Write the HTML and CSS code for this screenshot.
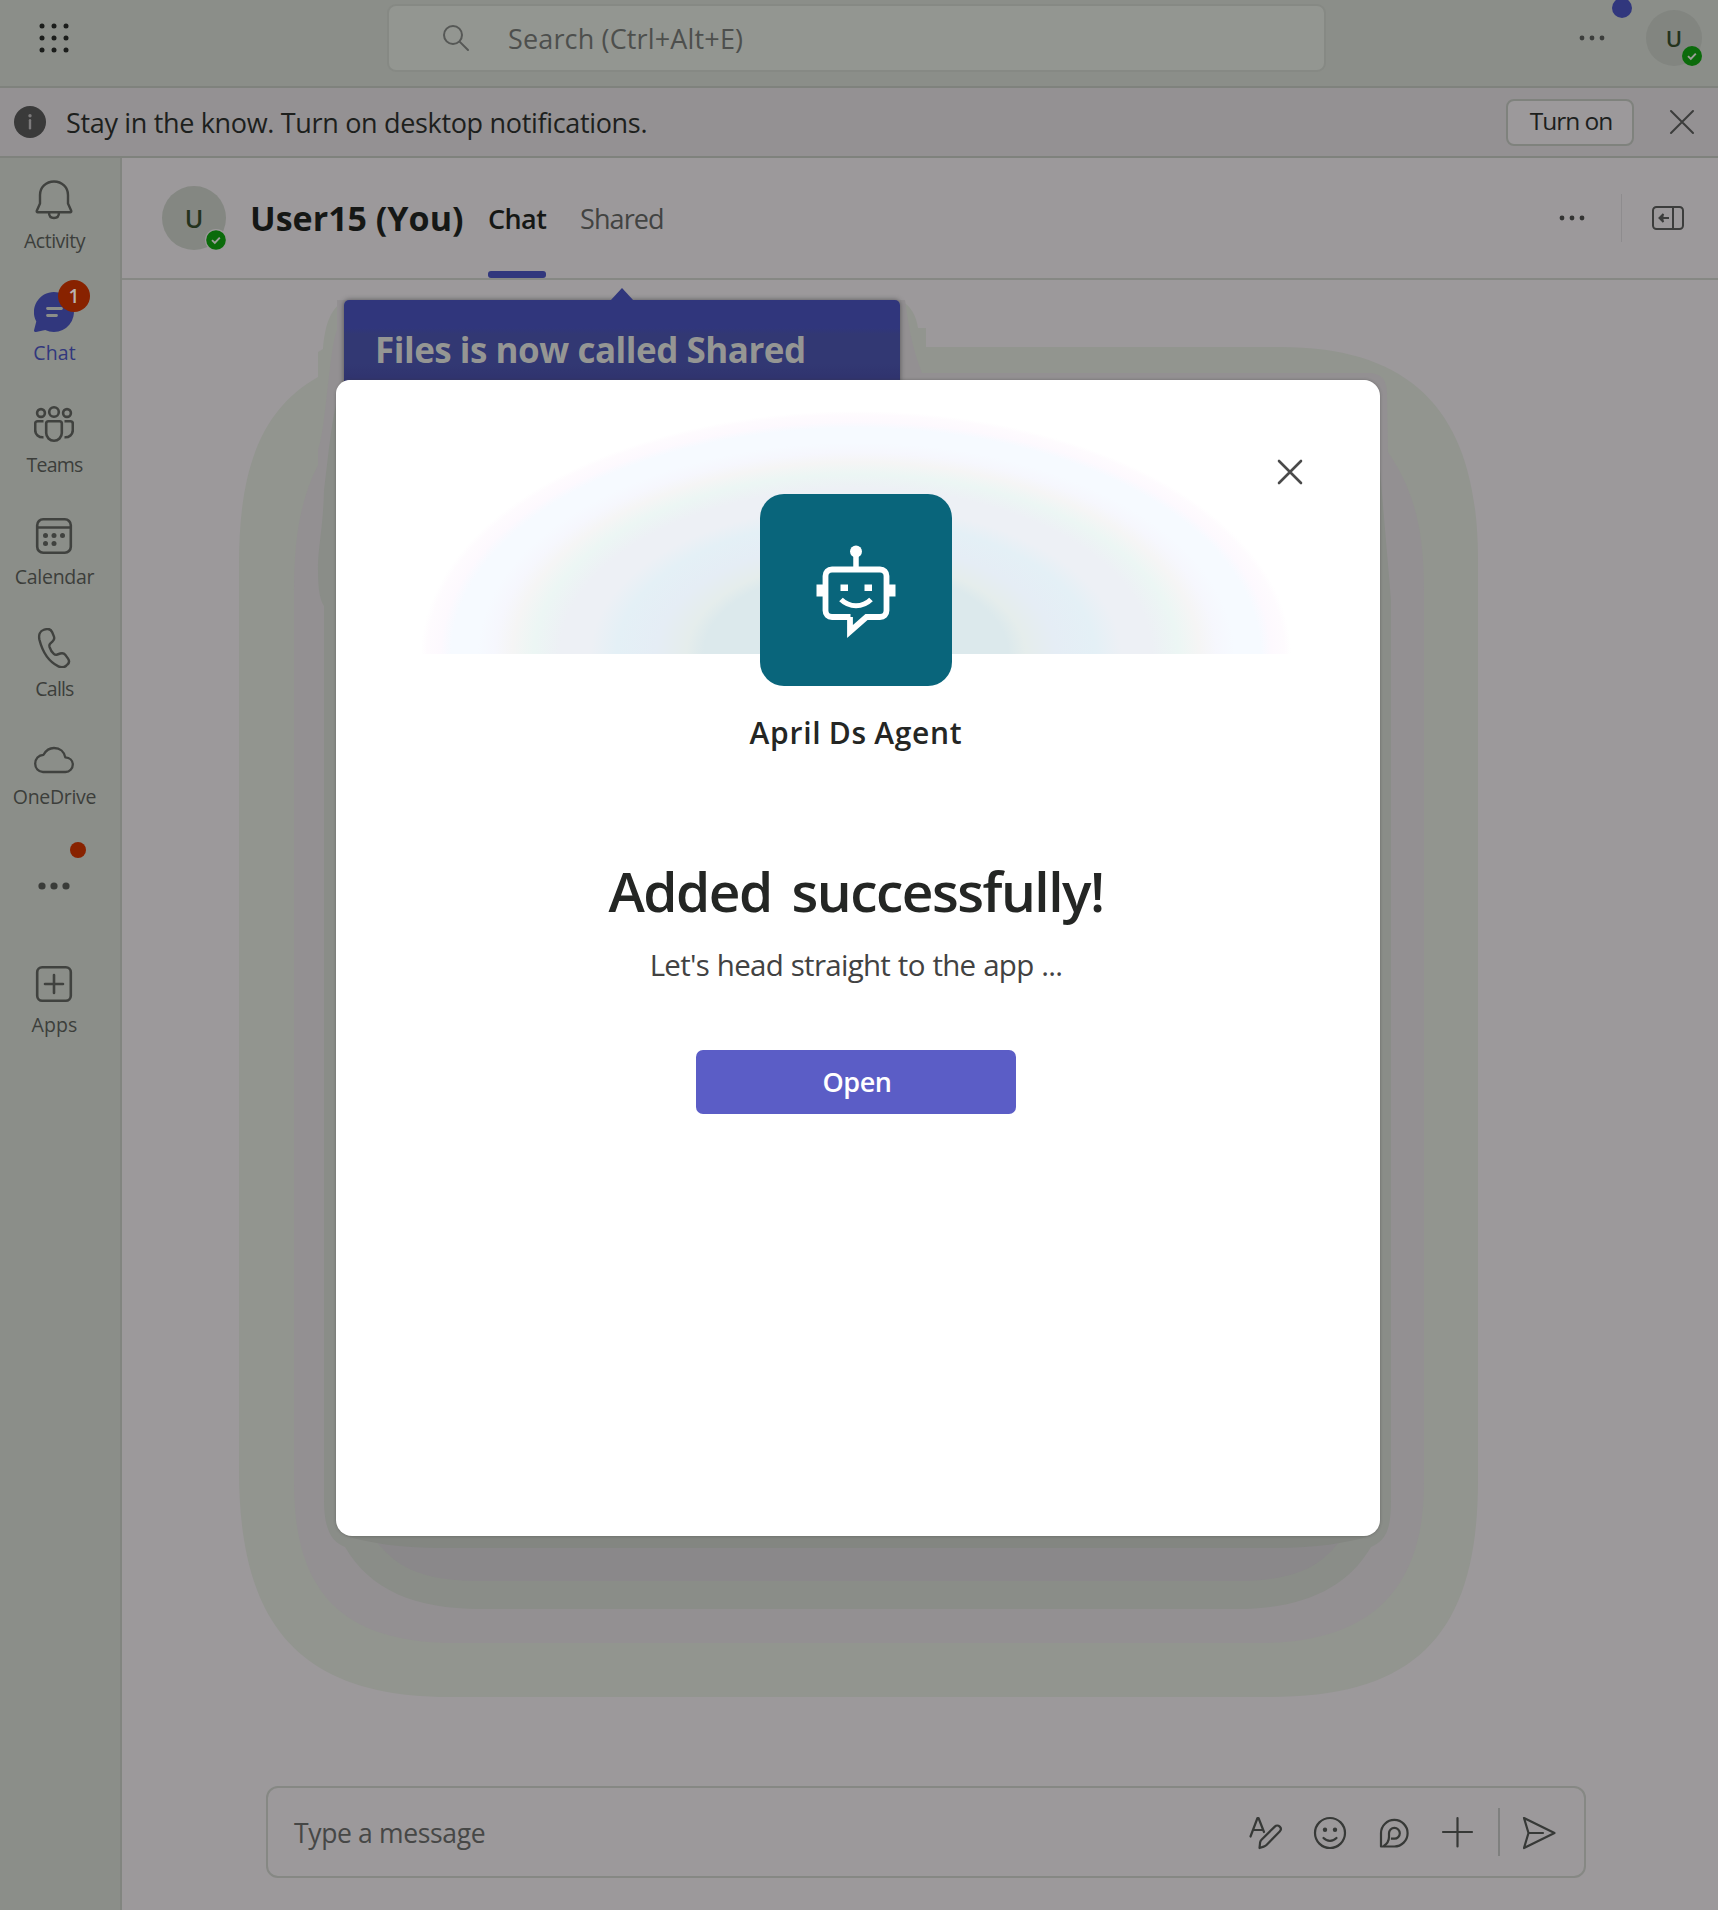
FILE: index.html
```html
<!DOCTYPE html>
<html lang="en">
<head>
<meta charset="utf-8">
<title>Chat</title>
<link rel="stylesheet" href="styles.css">
</head>
<body>
<div class="app">
  <header class="topbar">
    <svg class="waffle" width="32" height="32" viewBox="0 0 32 32"><g fill="#1b1d1b"><circle cx="4" cy="4" r="2.5"/><circle cx="16" cy="4" r="2.5"/><circle cx="28" cy="4" r="2.5"/><circle cx="4" cy="16" r="2.5"/><circle cx="16" cy="16" r="2.5"/><circle cx="28" cy="16" r="2.5"/><circle cx="4" cy="28" r="2.5"/><circle cx="16" cy="28" r="2.5"/><circle cx="28" cy="28" r="2.5"/></g></svg>
    <div class="search">
      <svg width="28" height="28" viewBox="0 0 28 28" fill="none" stroke="#565856" stroke-width="2" stroke-linecap="round"><circle cx="11" cy="11" r="9"/><path d="M17.6 17.6 26 26"/></svg>
      <span class="t-search">Search (Ctrl+Alt+E)</span>
    </div>
    <div class="more-top"><svg width="26" height="6" viewBox="0 0 26 6" fill="#3c3e3c"><circle cx="3" cy="3" r="2.4"/><circle cx="13" cy="3" r="2.4"/><circle cx="23" cy="3" r="2.4"/></svg><i class="news"></i></div>
    <div class="avatar small">U<svg class="status" width="20" height="20" viewBox="0 0 20 20"><circle cx="10" cy="10" r="10" fill="#0b6b0b"/><path d="m6 10.2 2.8 2.8 5-5.4" fill="none" stroke="#9c9f9a" stroke-width="1.9"/></svg></div>
  </header>

  <div class="banner">
    <svg width="32" height="32" viewBox="0 0 32 32"><circle cx="16" cy="16" r="16" fill="#3a3a3a"/><rect x="14.8" y="13" width="2.4" height="10.5" rx="1.2" fill="#7d7b7c"/><circle cx="16" cy="9.7" r="1.7" fill="#7d7b7c"/></svg>
    <span class="t-banner">Stay in the know. Turn on desktop notifications.</span>
    <button class="turn-on"><span class="t-turn">Turn on</span></button>
    <svg class="dismiss" width="26" height="26" viewBox="0 0 26 26" fill="none" stroke="#3c3d3c" stroke-width="2" stroke-linecap="round"><path d="m2 2 22 22M24 2 2 24"/></svg>
  </div>

  <div class="body">
    <nav class="rail">
      <a class="cell"><span class="ico"><svg width="40" height="40" viewBox="0 0 40 40" fill="none" stroke="#40423f" stroke-width="2.4" stroke-linejoin="round"><path d="M20 1.500C12 1.500 6 7.500 6 15v8.500l-3.200 7.200c-.3.9.1 1.600 1 1.600h32.400c.9 0 1.300-.7 1-1.600L34 23.500V15C34 7.500 28 1.500 20 1.500zM15 32.500c0 3.500 2 5.500 5 5.500s5-2 5-5.500"/></svg></span><b class="l-activity">Activity</b></a>
      <a class="cell on"><span class="ico"><svg width="40" height="40" viewBox="0 0 40 40"><path fill="#31377d" d="M20 0a20 20 0 1 1-8.800 38L2 40c-1.300.3-2.300-.8-1.900-2l2.200-8.500A20 20 0 0 1 20 0z"/><path d="M13.500 16.500h14M13.500 23.500h9" stroke="#8b8e89" stroke-width="2.800" stroke-linecap="round"/></svg><i class="badge">1</i></span><b class="l-chat">Chat</b></a>
      <a class="cell"><span class="ico"><svg width="40" height="40" viewBox="0 0 40 40" fill="none" stroke="#40423f" stroke-width="2.600"><circle cx="20" cy="8" r="4.800"/><circle cx="7" cy="9" r="3.900"/><circle cx="33" cy="9" r="3.900"/><path d="M14.500 17.200h11c1.500 0 2.300.8 2.300 2.300v9.500a7.800 7.800 0 0 1-15.600 0v-9.500c0-1.500.8-2.300 2.300-2.300zM9.500 17.200H3.700c-1.600 0-2.500.9-2.500 2.500V26c0 4.500 3.500 7.600 8.300 7.300M30.500 17.200h5.800c1.600 0 2.500.9 2.500 2.500V26c0 4.500-3.500 7.600-8.300 7.300"/></svg></span><b class="l-teams">Teams</b></a>
      <a class="cell"><span class="ico"><svg width="40" height="40" viewBox="0 0 40 40" fill="none" stroke="#40423f" stroke-width="2.600"><rect x="3.200" y="3.200" width="33.600" height="33.600" rx="6"/><path d="M3.200 11.500h33.600"/><g fill="#40423f" stroke="none"><circle cx="11.500" cy="19.500" r="2.500"/><circle cx="20" cy="19.500" r="2.500"/><circle cx="28.500" cy="19.500" r="2.500"/><circle cx="11.500" cy="27.500" r="2.500"/><circle cx="20" cy="27.500" r="2.500"/></g></svg></span><b class="l-calendar">Calendar</b></a>
      <a class="cell"><span class="ico"><svg width="40" height="40" viewBox="0 0 40 40" fill="none" stroke="#40423f" stroke-width="2.400" stroke-linejoin="round"><path d="m10.200 1.700 2.500-.6c2.700-.5 4.500.8 5.500 3.200l1.600 3.800c.8 2 .4 3.900-1.200 5.300l-2.400 2.200c-1 .9-1 2-.6 3.500.7 2.300 2.200 5 4.200 6.700 1.100 1 2.200 1.100 3.500.7l3-1c2-.7 3.900-.1 5.200 1.600l2.400 3.300c1.500 2 1.400 4.400-.5 6.100l-1 1c-2.200 2-5.200 2.300-8 .9C15 33.700 8.800 25 5.500 12 4.400 7.200 5.700 2.900 10.200 1.700z"/></svg></span><b class="l-calls">Calls</b></a>
      <a class="cell drive"><span class="ico"><svg width="40" height="40" viewBox="0 0 40 40" fill="none" stroke="#40423f" stroke-width="2.300" stroke-linejoin="round"><path d="M9 32c-4.600 0-7.800-3.700-7.800-8.300 0-4.900 3.300-8.700 8.300-8.900C11.800 10.700 15.500 8 20 8c6 0 10.300 3.800 11.300 9.400 4.400.2 7.500 3.200 7.500 7.200s-3.200 7.400-7.300 7.400z"/></svg></span><b class="l-drive">OneDrive</b></a>
      <a class="cell more"><svg width="32" height="8" viewBox="0 0 32 8" fill="#3a3c39"><circle cx="4" cy="4" r="3.600"/><circle cx="16" cy="4" r="3.600"/><circle cx="28" cy="4" r="3.600"/></svg><i class="dot"></i></a>
      <a class="cell"><span class="ico"><svg width="40" height="40" viewBox="0 0 40 40" fill="none" stroke="#40423f" stroke-width="2.600" stroke-linecap="round"><rect x="3.200" y="3.200" width="33.600" height="33.600" rx="5"/><path d="M20 11v18M11 20h18"/></svg></span><b class="l-apps">Apps</b></a>
    </nav>

    <main class="main">
      <div class="chat-head">
        <div class="avatar">U<svg class="status" width="22" height="22" viewBox="0 0 22 22"><circle cx="11" cy="11" r="11" fill="#9c999b"/><circle cx="11" cy="11" r="9.800" fill="#0b6b0b"/><path d="m7 11.200 2.800 2.800 5-5.400" fill="none" stroke="#9c9f9a" stroke-width="1.900"/></svg></div>
        <h1 class="t-name">User15 (You)</h1>
        <div class="tab on"><span class="t-chat">Chat</span></div>
        <div class="tab"><span class="t-shared">Shared</span></div>
        <svg class="head-more" width="26" height="6" viewBox="0 0 26 6" fill="#333433"><circle cx="3" cy="3" r="2.400"/><circle cx="13" cy="3" r="2.400"/><circle cx="23" cy="3" r="2.400"/></svg>
        <i class="sep"></i>
        <svg class="panel" width="32" height="24" viewBox="0 0 32 24" fill="none" stroke="#3c3d3c" stroke-width="2"><rect x="1" y="1" width="30" height="22" rx="3.500"/><path d="M21 1v22M17 12H8M11.500 8l-4 4 4 4"/><path d="M11.500 8l-4 4 4 4z" fill="#3c3d3c" stroke="none"/></svg>
      </div>
      <div class="canvas"></div>
      <div class="composer">
        <span class="t-type">Type a message</span>
        <svg width="34" height="34" viewBox="0 0 34 34" fill="none" stroke="#373937" stroke-width="2.200" stroke-linecap="round" stroke-linejoin="round"><path d="m1.500 20.500 7-18.500h1l5.500 14M4.500 14h9.500"/><path d="M10.500 32l.6-5.500c.2-1.200.6-2 1.400-2.800L25.800 10.600c1.400-1.400 3.500-1.400 4.900 0s1.400 3.500 0 4.900L17.500 29c-.8.800-1.600 1.200-2.800 1.600z"/></svg>
        <svg width="34" height="34" viewBox="0 0 34 34" fill="none" stroke="#373937" stroke-width="2.200" stroke-linecap="round"><circle cx="17" cy="17" r="15"/><path d="M10.500 22c3.500 3.700 9.500 3.700 13 0"/><g fill="#373937" stroke="none"><circle cx="12" cy="13.700" r="2.200"/><circle cx="22" cy="13.700" r="2.200"/></g></svg>
        <svg width="34" height="34" viewBox="0 0 34 34" fill="none" stroke="#373937" stroke-width="2.200" stroke-linejoin="round"><path d="M4 30.500V17a13.300 13.300 0 1 1 13.300 13.500z"/><path d="M6.500 30.300c4-2.500 5.500-5.500 5.500-9.500v-3.500a5.400 5.400 0 1 1 5.400 5.400h-3.500"/></svg>
        <svg width="34" height="34" viewBox="0 0 34 34" fill="none" stroke="#373937" stroke-width="2.200" stroke-linecap="round"><path d="M16.500 2v28.500M2 16h29"/></svg>
        <i class="csep"></i>
        <svg class="send" width="34" height="34" viewBox="0 0 34 34" fill="none" stroke="#373937" stroke-width="2.200" stroke-linecap="round" stroke-linejoin="round"><path d="M2 2 32.500 17 2 32l4.500-15zM6.500 17H21"/></svg>
      </div>
    </main>
  </div>

  <svg class="shade" width="1718" height="1910" viewBox="0 0 1718 1910">
    <path fill="#92958f" d="M323 349C325 325 330 310 344 300H900C911 306 916 315 918 328H926V347H1280C1420 347 1478 420 1478 560V1480C1478 1630 1420 1697 1270 1697H450C295 1697 239 1620 239 1470V565C239 470 260 410 318 377V352Z"/>
    <path fill="#939092" d="M337 300H905C909 330 913 350 922 373H1370Q1387 374 1387 393L1388 452C1410 485 1424 520 1424 590V1483C1424 1580 1380 1643 1260 1643H455C340 1643 294 1590 294 1483V590C294 540 300 500 318 465V450C326 430 329 350 337 330Z"/>
    <path fill="#8a8d88" d="M337 400C330 430 328 460 324 490C323 530 318 545 318 570C318 590 320 600 324 606V1500C324 1530 332 1542 345 1547C370 1590 415 1609 480 1609H1236C1300 1609 1346 1590 1371 1547C1386 1540 1391 1530 1391 1500V600L1380 470Z"/>
    <path fill="#8a888a" d="M375 1540C392 1560 410 1581 480 1581H1236C1306 1581 1324 1560 1341 1540Z"/>
    <path fill="#838681" d="M345 1536C370 1543 400 1548 440 1548H1276C1316 1548 1346 1543 1371 1536Z"/>
  </svg>

  <div class="callout"><i class="beak"></i><strong class="t-callout">Files is now called Shared</strong></div>

  <section class="dialog">
    <div class="glow">
      <div class="app-icon">
        <svg width="84" height="96" viewBox="0 0 84 96" fill="none" stroke="#fff" stroke-width="5.800"><circle cx="41" cy="6.500" r="6" fill="#fff" stroke="none"/><path d="M41 10v14" stroke-width="5.500"/><path d="M35.500 72H17c-4 0-6.500-2.500-6.500-6.500V31c0-4 2.500-6.500 6.500-6.500h48c4 0 6.500 2.500 6.500 6.500v34.500c0 4-2.500 6.500-6.500 6.500H51.500L35 86.500V72z"/><g fill="#fff" stroke="none"><path d="M1.500 39.500H9v12H1.500zM73 39.500h7.500v12H73zM25.500 39.500h7.500v6.500h-7.500zM49.500 39.500H57v6.500h-7.500z"/></g><path d="M26 54.500c8.500 8.300 21.500 8.300 30 0" stroke-width="5.200"/></svg>
      </div>
    </div>
    <svg class="close" width="26" height="26" viewBox="0 0 26 26" fill="none" stroke="#4a4a4a" stroke-width="2.600" stroke-linecap="round"><path d="m2 2 22 22M24 2 2 24"/></svg>
    <div class="app-name"><span class="t-app">April Ds Agent</span></div>
    <h2 class="done"><span class="t-done">Added successfully!</span></h2>
    <p class="sub"><span class="t-sub">Let's head straight to the app ...</span></p>
    <button class="open"><span class="t-open">Open</span></button>
  </section>
</div>
</body>
</html>
```
FILE: styles.css
```css
* { box-sizing: border-box; }
body {
  margin: 0;
  font-family: "Open Sans", "Noto Sans", sans-serif;
  color: #1d1f1d;
}
svg { display: block; flex: none; }
span, b, strong, h1, h2 { white-space: nowrap; }
button { font: inherit; padding: 0; margin: 0; }

.app {
  position: relative;
  width: 1718px;
  height: 1910px;
  overflow: hidden;
  display: flex;
  flex-direction: column;
  background: #9c999b;
}

/* top bar */
.topbar {
  height: 88px;
  padding: 0 16px 12px 38px;
  display: flex;
  align-items: center;
  background: #8b8e89;
  border-bottom: 2px solid #7f827d;
  flex: none;
}
.waffle { margin-top: 2px; }
.search {
  width: 939px;
  height: 68px;
  margin-left: 317px;
  margin-top: 2px;
  padding-left: 53px;
  display: flex;
  align-items: center;
  gap: 38px;
  background: #939691;
  border: 2px solid #868984;
  border-radius: 9px;
  font-size: 27px;
  color: #4d4f4d;
  flex: none;
}
.t-search { letter-spacing: .15px; }
.more-top { position: relative; margin-left: 253px; margin-top: 2px; flex: none; }
.news {
  position: absolute;
  left: 33px;
  top: -37px;
  width: 20px;
  height: 20px;
  border-radius: 50%;
  background: #31377d;
}
.avatar {
  position: relative;
  width: 64px;
  height: 64px;
  border-radius: 50%;
  background: #848782;
  display: flex;
  align-items: center;
  justify-content: center;
  font-size: 25px;
  font-weight: 600;
  color: #24331d;
  flex: none;
}
.avatar.small {
  width: 56px;
  height: 56px;
  margin-left: auto;
  margin-top: 2px;
  background: #828580;
  font-size: 22px;
}
.status { position: absolute; right: -1px; bottom: -1px; }
.small .status { right: 0; bottom: 0; }

/* notification banner */
.banner {
  height: 70px;
  padding: 0 23px 0 14px;
  display: flex;
  align-items: center;
  background: #949193;
  border-bottom: 2px solid #7f827d;
  font-size: 27px;
  flex: none;
}
.t-banner { margin-left: 20px; letter-spacing: -.33px; }
.turn-on {
  width: 128px;
  height: 47px;
  margin-left: auto;
  background: #9c999b;
  border: 2px solid #7f827d;
  border-radius: 8px;
  font-size: 24.500px;
  line-height: 38px;
  padding-bottom: 3px;
  color: #1d1f1d;
}
.t-turn { letter-spacing: -1px; margin-left: 2px; }
.dismiss { margin-left: 35px; }

/* left rail */
.body { flex: 1; display: flex; min-height: 0; }
.rail {
  width: 122px;
  padding-right: 12px;
  background: #8b8e89;
  border-right: 2px solid #828580;
  flex: none;
}
.cell {
  position: relative;
  height: 112px;
  padding-top: 20px;
  display: flex;
  flex-direction: column;
  align-items: center;
}
.ico { position: relative; width: 44px; height: 44px; padding: 2px; }
.cell b { margin-top: 5px; margin-left: 1px; font-size: 19.500px; line-height: 28px; font-weight: 400; letter-spacing: -.3px; color: #3c3e3b; }
.cell b.l-chat, .cell b.l-apps { letter-spacing: .1px; }
.cell b.l-teams, .cell b.l-calls { letter-spacing: -.8px; }
.cell b.l-activity { letter-spacing: -.5px; }
.cell.on b { color: #31377d; }
.cell.drive b { margin-top: 1px; }
.cell.more { padding-top: 52px; }
.badge {
  position: absolute;
  left: 26px;
  top: -10px;
  width: 32px;
  height: 32px;
  border-radius: 50%;
  background: #882200;
  color: #b9b3b0;
  font: 600 19px/32px "Open Sans", sans-serif;
  text-align: center;
}
.dot {
  position: absolute;
  left: 70px;
  top: 12px;
  width: 16px;
  height: 16px;
  border-radius: 50%;
  background: #882200;
}

/* conversation */
.main { flex: 1; display: flex; flex-direction: column; min-width: 0; }
.chat-head {
  height: 122px;
  padding: 0 34px 0 40px;
  display: flex;
  align-items: center;
  border-bottom: 2px solid #868884;
  flex: none;
}
h1 { margin: 0 0 0 24px; width: 214px; font-size: 34px; font-weight: 700; color: #151715; }
.tab { position: relative; height: 100%; display: flex; align-items: center; font-size: 27px; color: #424342; }
.tab + .tab { margin-left: 34px; }
h1 + .tab { margin-left: 24px; width: 58px; }
.t-chat { letter-spacing: -.6px; }
.t-shared { letter-spacing: -.9px; }
.tab.on { font-weight: 600; color: #151715; }
.tab.on::after {
  content: "";
  position: absolute;
  left: 0;
  bottom: 0;
  width: 58px;
  height: 7px;
  border-radius: 3px;
  background: #31377d;
}
.head-more { margin-left: auto; }
.sep { width: 1px; height: 48px; margin-left: 36px; background: #8e8c8e; }
.panel { margin-left: 30px; }
.canvas { flex: 1; }
.composer {
  height: 92px;
  margin: 0 132px 32px 144px;
  padding: 2px 28px 0 26px;
  display: flex;
  align-items: center;
  gap: 30px;
  border: 2px solid #868884;
  border-radius: 12px;
  font-size: 26.500px;
  color: #464746;
}
.t-type { margin-right: auto; letter-spacing: -.35px; }
.csep { width: 2px; height: 48px; margin: -2px -8px 0 -7px; background: #7f807f; }

/* layered shadow behind the dialog */
.shade { position: absolute; left: 0; top: 0; }

.callout {
  position: absolute;
  left: 344px;
  top: 300px;
  width: 556px;
  height: 90px;
  padding: 24px 31px;
  border-radius: 5px 5px 0 0;
  background: linear-gradient(#30367c 0 28px, #323873 34px 64px, #30346f 76px);
  box-shadow: 0 0 5px rgba(40, 42, 45, .6);
  font-size: 35px;
  line-height: 52px;
  letter-spacing: -.48px;
  color: #959693;
}
.beak {
  position: absolute;
  left: 266px;
  top: -12px;
  width: 24px;
  height: 13px;
  background: #30367c;
  clip-path: polygon(50% 0, 100% 100%, 0 100%);
}

/* dialog */
.dialog {
  position: absolute;
  left: 336px;
  top: 380px;
  width: 1044px;
  height: 1156px;
  padding-right: 4px;
  display: flex;
  flex-direction: column;
  align-items: center;
  background: #fff;
  border-radius: 16px;
  box-shadow: 0 0 3px rgba(60, 60, 60, .45);
  color: #242624;
}
.glow {
  width: 1040px;
  height: 274px;
  padding-top: 114px;
  display: flex;
  justify-content: center;
  border-radius: 14px 14px 0 0;
  background: radial-gradient(ellipse 435px 243px at 50% 100%,
    #dce9ec 0, #dce9ec 35%, #e5edec 39%, #e5edf5 46%, #e4f0f6 55%, #edf0f5 61%,
    #edf0f5 68%, #ecf6f4 74%, #f5f5f5 79%, #f6f7fd 83%, #f6faff 87%, #f6faff 93%,
    #fdf9fe 95.5%, #fefbfe 98.5%, #fff 100%);
}
.app-icon {
  width: 192px;
  height: 192px;
  padding: 51px 0 0 55px;
  border-radius: 24px;
  background: #09657b;
  flex: none;
}
.close { position: absolute; right: 77px; top: 79px; }
.app-name { margin-top: 57px; font-size: 30px; line-height: 44px; font-weight: 600; }
.t-app { letter-spacing: .7px; word-spacing: -1px; }
.done { margin: 100px 0 0; font-size: 55px; line-height: 72px; font-weight: 600; }
.t-done { letter-spacing: -1.5px; word-spacing: 7px; }
.sub { margin: 16px 0 0; font-size: 29.500px; line-height: 44px; color: #424242; }
.t-sub { letter-spacing: -.72px; word-spacing: .8px; }
.open {
  width: 320px;
  height: 64px;
  margin-top: 63px;
  padding-bottom: 2px;
  border: 0;
  border-radius: 7px;
  background: #5b5dc6;
  font-size: 27px;
  font-weight: 600;
  color: #fff;
}
.t-open { letter-spacing: -.5px; margin-left: 2px; }
```
